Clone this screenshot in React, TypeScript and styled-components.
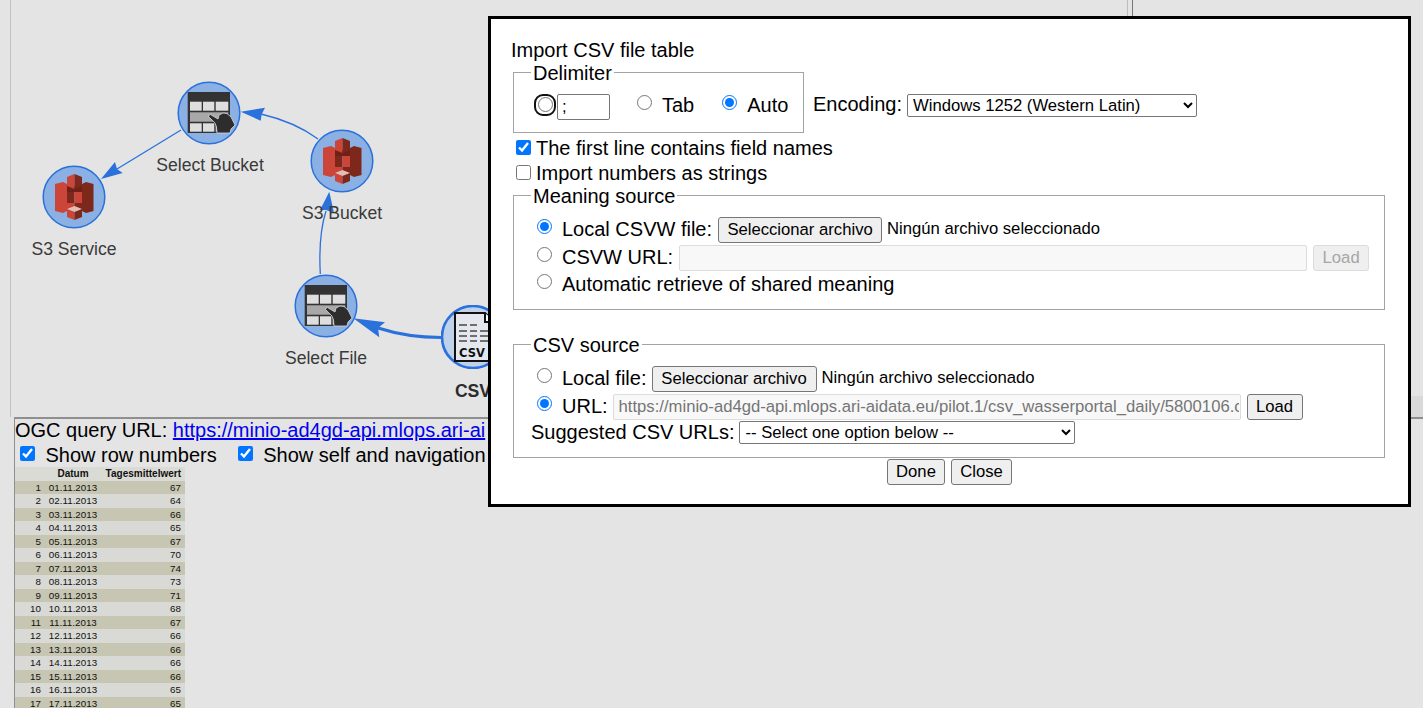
import React from 'react';
import styled, { createGlobalStyle } from 'styled-components';

const GlobalStyle = createGlobalStyle`
  html, body {
    margin: 0;
    padding: 0;
    background: #e4e4e4;
    overflow: hidden;
  }
  body {
    font-family: "Liberation Sans", Arial, sans-serif;
    font-size: 20px;
    color: #000;
  }
`;

const Page = styled.div`
  position: relative;
  width: 1423px;
  height: 708px;
  overflow: hidden;
  background: #e4e4e4;
`;

const MapFrame = styled.div`
  position: relative;
  height: 417px;
  margin-left: 10px;
  border-left: 1px solid #c2c2c2;
`;

const EdgeLayer = styled.svg`
  position: absolute;
  left: -11px;
  top: 0;
`;

const GraphNode = styled.div<{ $x: number; $y: number }>`
  position: absolute;
  left: ${p => p.$x - 43}px;
  top: ${p => p.$y - 32}px;
  width: 64px;
  height: 64px;
`;

const NodeLabel = styled.div<{ $x: number; $y: number; $bold?: boolean }>`
  position: absolute;
  left: ${p => p.$x - 110}px;
  top: ${p => p.$y - 11}px;
  width: 200px;
  height: 22px;
  line-height: 22px;
  text-align: center;
  font-size: 17.6px;
  font-weight: ${p => (p.$bold ? 700 : 400)};
  color: ${p => (p.$bold ? '#2b2b2b' : '#3a3a3a')};
`;

const Splitter = styled.div<{ $x: number; $color: string }>`
  position: absolute;
  left: ${p => p.$x - 11}px;
  top: 0;
  width: 1px;
  height: 417px;
  background: ${p => p.$color};
`;

const ScrollStub = styled.div`
  position: absolute;
  right: 0;
  bottom: 0;
  width: 12px;
  height: 21px;
  background: #d9d9d9;
`;

const ResultPanel = styled.section`
  margin-left: 14px;
  height: 289px;
  border-left: 1px solid #8f8f8f;
  border-top: 2px solid #8f8f8f;
`;

const QueryLine = styled.div`
  height: 23px;
  line-height: 23px;
  white-space: nowrap;
  a {
    color: #0000ee;
  }
`;

const OptionsLine = styled.div`
  display: flex;
  align-items: center;
  box-sizing: border-box;
  height: 25px;
  padding: 2px 0 0 5px;
  white-space: nowrap;
`;

const CheckBox = styled.input.attrs({ type: 'checkbox' })`
  width: 15px;
  height: 15px;
  margin: 0 5px 2px 0;
  flex: none;
`;

const PanelCheckBox = styled(CheckBox)`
  margin: 0 10.5px 4px 0;
`;

const OptionSpacer = styled.span<{ $width: number }>`
  width: ${p => p.$width}px;
  flex: none;
`;

const DataGrid = styled.div`
  width: 170px;
  font-size: 9.8px;
  color: #111;
`;

const DataRow = styled.div<{ $tone: 'head' | 'dark' | 'light' }>`
  display: grid;
  grid-template-columns: 26px 7px 50px 83px;
  height: 13.5px;
  line-height: 13.5px;
  background: ${p => (p.$tone === 'dark' ? '#c6c6b2' : p.$tone === 'light' ? '#d9dad5' : '#dbdbd5')};
  font-weight: ${p => (p.$tone === 'head' ? 700 : 400)};
  font-size: ${p => (p.$tone === 'head' ? '10px' : 'inherit')};
`;

const RowNumber = styled.span`
  grid-column: 1;
  text-align: right;
`;

const DateCell = styled.span`
  grid-column: 3;
  text-align: center;
`;

const ValueCell = styled.span`
  grid-column: 4;
  text-align: right;
  white-space: nowrap;
`;

const Dialog = styled.div`
  position: absolute;
  left: 488px;
  top: 16px;
  width: 923px;
  height: 491px;
  box-sizing: border-box;
  padding: 20px 0 0 20px;
  border: 3.5px solid #000;
  background: #fff;
`;

const DialogTitle = styled.div`
  height: 23px;
  line-height: 23px;
`;

const DelimiterLine = styled.div`
  display: flex;
  align-items: flex-start;
  margin-top: -1px;
`;

const Group = styled.fieldset<{ $width: number; $height: number; $after?: number }>`
  box-sizing: border-box;
  width: ${p => p.$width}px;
  height: ${p => p.$height}px;
  margin: 0 0 ${p => p.$after ?? 0}px 2px;
  padding: 8px 0 0 23px;
  border: 1px solid #a3a3a3;
  min-width: 0;
  flex: none;
`;

const GroupTitle = styled.legend`
  height: 23px;
  line-height: 25px;
  padding: 0 2px;
  margin-left: -6px;
`;

const Row = styled.div<{ $height: number; $indent?: number }>`
  display: flex;
  align-items: center;
  height: ${p => p.$height}px;
  margin-left: ${p => p.$indent ?? 0}px;
  white-space: nowrap;
`;

const Radio = styled.input.attrs({ type: 'radio' })`
  width: 15px;
  height: 15px;
  margin: 0 10px 5px 0;
  flex: none;
`;

const FocusRing = styled.span`
  display: flex;
  align-items: center;
  justify-content: center;
  box-sizing: border-box;
  width: 22px;
  height: 22px;
  margin: 0 1px 1px -3px;
  flex: none;
  border: 2.5px solid #101010;
  border-radius: 9px;

  input {
    margin: 0;
  }
`;

const TextBox = styled.input<{ $width: number; $lead: number }>`
  box-sizing: border-box;
  width: ${p => p.$width}px;
  height: 26px;
  margin: 2px 6px 0 ${p => p.$lead}px;
  padding: 0 1px 0 5px;
  font-family: inherit;
  font-size: 16.67px;
  color: #757575;
  background: #f8f8f8;
  border: 1px solid #dcdcdc;
  border-radius: 2px;
`;

const DelimiterBox = styled.input`
  box-sizing: border-box;
  width: 53px;
  height: 26px;
  margin: 3px 27px 0 0;
  padding: 0 4px;
  font-family: inherit;
  font-size: 16.67px;
  color: #000;
  background: #fff;
  border: 1px solid #767676;
  border-radius: 2px;
`;

const PushButton = styled.button<{ $width: number }>`
  box-sizing: border-box;
  width: ${p => p.$width}px;
  height: 26px;
  margin: 0;
  padding: 0;
  font-family: inherit;
  font-size: 16.67px;
  color: #000;
  background: #efefef;
  border: 1px solid #767676;
  border-radius: 3px;

  &:disabled {
    color: #a6a6a6;
    background: #efefef;
    border-color: #dcdcdc;
  }
`;

const RowButton = styled(PushButton)<{ $lead?: number }>`
  margin: 2px 0 0 ${p => p.$lead ?? 0}px;
`;

const FileHint = styled.span`
  margin-left: 5px;
  font-size: 16.67px;
`;

const Dropdown = styled.select<{ $width: number }>`
  box-sizing: border-box;
  width: ${p => p.$width}px;
  height: 23px;
  margin: 1px 0 0 5px;
  padding-left: 1px;
  font-family: inherit;
  font-size: 16.67px;
  color: #000;
  background: #fff;
  border: 1px solid #767676;
  border-radius: 2px;
`;

const EncodingGroup = styled.div`
  display: flex;
  align-items: center;
  height: 23px;
  margin: 32px 0 0 9px;
`;

const CheckList = styled.div`
  height: 51px;
  padding-top: 3px;
  box-sizing: border-box;
`;

const CheckLine = styled.label`
  display: flex;
  align-items: center;
  height: 25px;
  margin-left: 5px;
`;

const DialogActions = styled.div`
  display: flex;
  justify-content: center;
  gap: 6px;
  margin: 1px 0 0 -20px;
`;

const VALUES = [67, 64, 66, 65, 67, 70, 74, 73, 71, 68, 67, 66, 66, 66, 66, 65, 65];
const CSV_URL = 'https://minio-ad4gd-api.mlops.ari-aidata.eu/pilot.1/csv_wasserportal_daily/5800106.csv';

const Disc = ({ light }: { light?: boolean }) => (
  <circle
    cx="32"
    cy="32"
    r={light ? 31 : 30.8}
    fill={light ? '#c0d2ea' : '#8ab0e4'}
    stroke="#2a71db"
    strokeWidth={light ? 2.6 : 1.5}
  />
);

const S3Node = () => (
  <svg width="64" height="64" viewBox="0 0 64 64">
    <Disc />
    <polygon points="13,19 21,17 25,19 25,46 21,48 13,46" fill="#cb4639" />
    <polygon points="51.5,19 44,17 40,19 40,46 44,48 51.5,46" fill="#7e281c" />
    <rect x="25" y="21" width="15" height="6" fill="#6f2118" />
    <rect x="25" y="27" width="7.5" height="11" fill="#7e281c" />
    <rect x="32.5" y="27" width="7.5" height="11" fill="#cb4639" />
    <rect x="25" y="38" width="7.5" height="6" fill="#cb4639" />
    <rect x="32.5" y="38" width="7.5" height="6" fill="#7e281c" />
    <polygon points="25,12 32.5,9 32.5,24 25,21" fill="#cb4639" />
    <polygon points="32.5,9 40,12 40,21 32.5,24" fill="#7e281c" />
    <polygon points="25,44 32.5,41 40,44 32.5,47" fill="#e6bdb2" />
    <polygon points="25,44 32.5,47 32.5,55 25,52" fill="#cb4639" />
    <polygon points="32.5,47 40,44 40,52 32.5,55" fill="#7e281c" />
  </svg>
);

const TableNode = () => (
  <svg width="64" height="64" viewBox="0 0 64 64">
    <Disc />
    <rect x="10.7" y="11" width="42.3" height="41" fill="#333" />
    <rect x="13" y="20.7" width="11.7" height="9" fill="#dedede" />
    <rect x="26" y="20.7" width="11.3" height="9" fill="#dedede" />
    <rect x="38.7" y="20.7" width="12.6" height="9" fill="#dedede" />
    <rect x="13" y="31.3" width="38.3" height="9.4" fill="#a8a8a8" />
    <rect x="13" y="42.3" width="11.7" height="8.4" fill="#dedede" />
    <rect x="26" y="42.3" width="11.3" height="8.4" fill="#dedede" />
    <rect x="38.7" y="42.3" width="12.6" height="8.4" fill="#dedede" />
    <path
      d="M31 35 L33.5 33.5 L41 38 L42 34 L46 32 L50 32.5 L54 36 L58 44 L54 48 L53 52 L40 52 L39.5 46 L38 42 Z"
      fill="#2d2d2d"
      stroke="#d8d8d8"
      strokeWidth="0.8"
      strokeLinejoin="round"
    />
  </svg>
);

const CsvNode = () => (
  <svg width="64" height="64" viewBox="0 0 64 64">
    <Disc light />
    <path d="M14 8 H44 L54 17 V56 H14 Z" fill="#e4e8ee" stroke="#111" strokeWidth="2" />
    <path d="M44 8 V17 H54" fill="#fff" stroke="#111" strokeWidth="2" />
    <g stroke="#6f6f6f" strokeWidth="2">
      <path d="M18 20 H26 M29 20 H36" />
      <path d="M18 26 H26 M29 26 H36 M39 26 H50" />
      <path d="M18 31 H26 M29 31 H36 M39 31 H50" />
      <path d="M18 36 H26 M29 36 H36 M39 36 H50" />
    </g>
    <text x="18" y="52" fontFamily="'DejaVu Sans', sans-serif" fontWeight="700" fontSize="11.5" fill="#111">
      CSV
    </text>
  </svg>
);

const Edges = () => (
  <EdgeLayer width="520" height="417" viewBox="0 0 520 417">
    <g fill="none" stroke="#2a71db">
      <path d="M181 130 L117 169" strokeWidth="1.3" />
      <path d="M318 139 Q295 122 261 114" strokeWidth="1.3" />
      <path d="M320.3 274 C319 250 320 230 326 211" strokeWidth="1.3" />
      <path d="M441 337.5 C420 337.5 400 335 378 328" strokeWidth="3" />
    </g>
    <g fill="#2a71db">
      <polygon points="101,179 115,162 117,169 122.7,173" />
      <polygon points="240.7,111.7 265,107.7 261.7,114.3 260.7,120.7" />
      <polygon points="329.3,191.7 334,213 326,210 320,210" />
      <polygon points="353.3,318.3 385,322.3 378,328 379.3,337.3" />
    </g>
  </EdgeLayer>
);

const App = () => {
  return (
    <Page>
      <GlobalStyle />
      <MapFrame>
        <Splitter $x={1127} $color="#bdbdbd" />
        <Splitter $x={1132} $color="#777" />
        <ScrollStub />
        <Edges />
        <GraphNode $x={209} $y={113}>
          <TableNode />
        </GraphNode>
        <NodeLabel $x={209} $y={165}>Select Bucket</NodeLabel>
        <GraphNode $x={341.5} $y={161}>
          <S3Node />
        </GraphNode>
        <NodeLabel $x={341} $y={213}>S3 Bucket</NodeLabel>
        <GraphNode $x={74} $y={196.5}>
          <S3Node />
        </GraphNode>
        <NodeLabel $x={73} $y={249}>S3 Service</NodeLabel>
        <GraphNode $x={325.5} $y={305.5}>
          <TableNode />
        </GraphNode>
        <NodeLabel $x={325} $y={358}>Select File</NodeLabel>
        <GraphNode $x={472.5} $y={337}>
          <CsvNode />
        </GraphNode>
        <NodeLabel $x={472} $y={391} $bold>CSV</NodeLabel>
      </MapFrame>

      <ResultPanel>
        <QueryLine>
          OGC query URL: <a href={CSV_URL}>https://minio-ad4gd-api.mlops.ari-ai</a>
        </QueryLine>
        <OptionsLine>
          <PanelCheckBox defaultChecked />
          Show row numbers
          <OptionSpacer $width={21} />
          <PanelCheckBox defaultChecked />
          Show self and navigation
        </OptionsLine>
        <DataGrid>
          <DataRow $tone="head">
            <DateCell>Datum</DateCell>
            <ValueCell>Tagesmittelwert</ValueCell>
          </DataRow>
          {VALUES.map((value, i) => {
            const day = String(i + 1).padStart(2, '0');
            return (
              <DataRow key={day} $tone={i % 2 === 0 ? 'dark' : 'light'}>
                <RowNumber>{i + 1}</RowNumber>
                <DateCell>{day}.11.2013</DateCell>
                <ValueCell>{value}</ValueCell>
              </DataRow>
            );
          })}
        </DataGrid>
      </ResultPanel>

      <Dialog>
        <DialogTitle>Import CSV file table</DialogTitle>
        <DelimiterLine>
          <Group $width={291} $height={72}>
            <GroupTitle>Delimiter</GroupTitle>
            <Row $height={26}>
              <FocusRing>
                <Radio name="delimiter" />
              </FocusRing>
              <DelimiterBox defaultValue=";" />
              <Radio name="delimiter" />
              <span>Tab</span>
              <OptionSpacer $width={28} />
              <Radio name="delimiter" defaultChecked />
              <span>Auto</span>
            </Row>
          </Group>
          <EncodingGroup>
            <span>Encoding:</span>
            <Dropdown $width={290} defaultValue="1252">
              <option value="1252">Windows 1252 (Western Latin)</option>
            </Dropdown>
          </EncodingGroup>
        </DelimiterLine>
        <CheckList>
          <CheckLine>
            <CheckBox defaultChecked />
            The first line contains field names
          </CheckLine>
          <CheckLine>
            <CheckBox />
            Import numbers as strings
          </CheckLine>
        </CheckList>
        <Group $width={872} $height={126} $after={23}>
          <GroupTitle>Meaning source</GroupTitle>
          <Row $height={28}>
            <Radio name="meaning" defaultChecked />
            <span>Local CSVW file:</span>
            <RowButton $width={164} $lead={6}>Seleccionar archivo</RowButton>
            <FileHint>Ningún archivo seleccionado</FileHint>
          </Row>
          <Row $height={28}>
            <Radio name="meaning" />
            <span>CSVW URL:</span>
            <TextBox $width={628} $lead={6} disabled />
            <RowButton $width={56} disabled>Load</RowButton>
          </Row>
          <Row $height={26}>
            <Radio name="meaning" />
            <span>Automatic retrieve of shared meaning</span>
          </Row>
        </Group>
        <Group $width={872} $height={125}>
          <GroupTitle>CSV source</GroupTitle>
          <Row $height={28}>
            <Radio name="source" />
            <span>Local file:</span>
            <RowButton $width={165} $lead={5}>Seleccionar archivo</RowButton>
            <FileHint>Ningún archivo seleccionado</FileHint>
          </Row>
          <Row $height={28}>
            <Radio name="source" defaultChecked />
            <span>URL:</span>
            <TextBox $width={628} $lead={5} disabled defaultValue={CSV_URL} />
            <RowButton $width={56}>Load</RowButton>
          </Row>
          <Row $height={24} $indent={-6}>
            <span>Suggested CSV URLs:</span>
            <Dropdown $width={336}>
              <option>-- Select one option below --</option>
            </Dropdown>
          </Row>
        </Group>
        <DialogActions>
          <PushButton $width={58}>Done</PushButton>
          <PushButton $width={61}>Close</PushButton>
        </DialogActions>
      </Dialog>
    </Page>
  );
};

export default App;
